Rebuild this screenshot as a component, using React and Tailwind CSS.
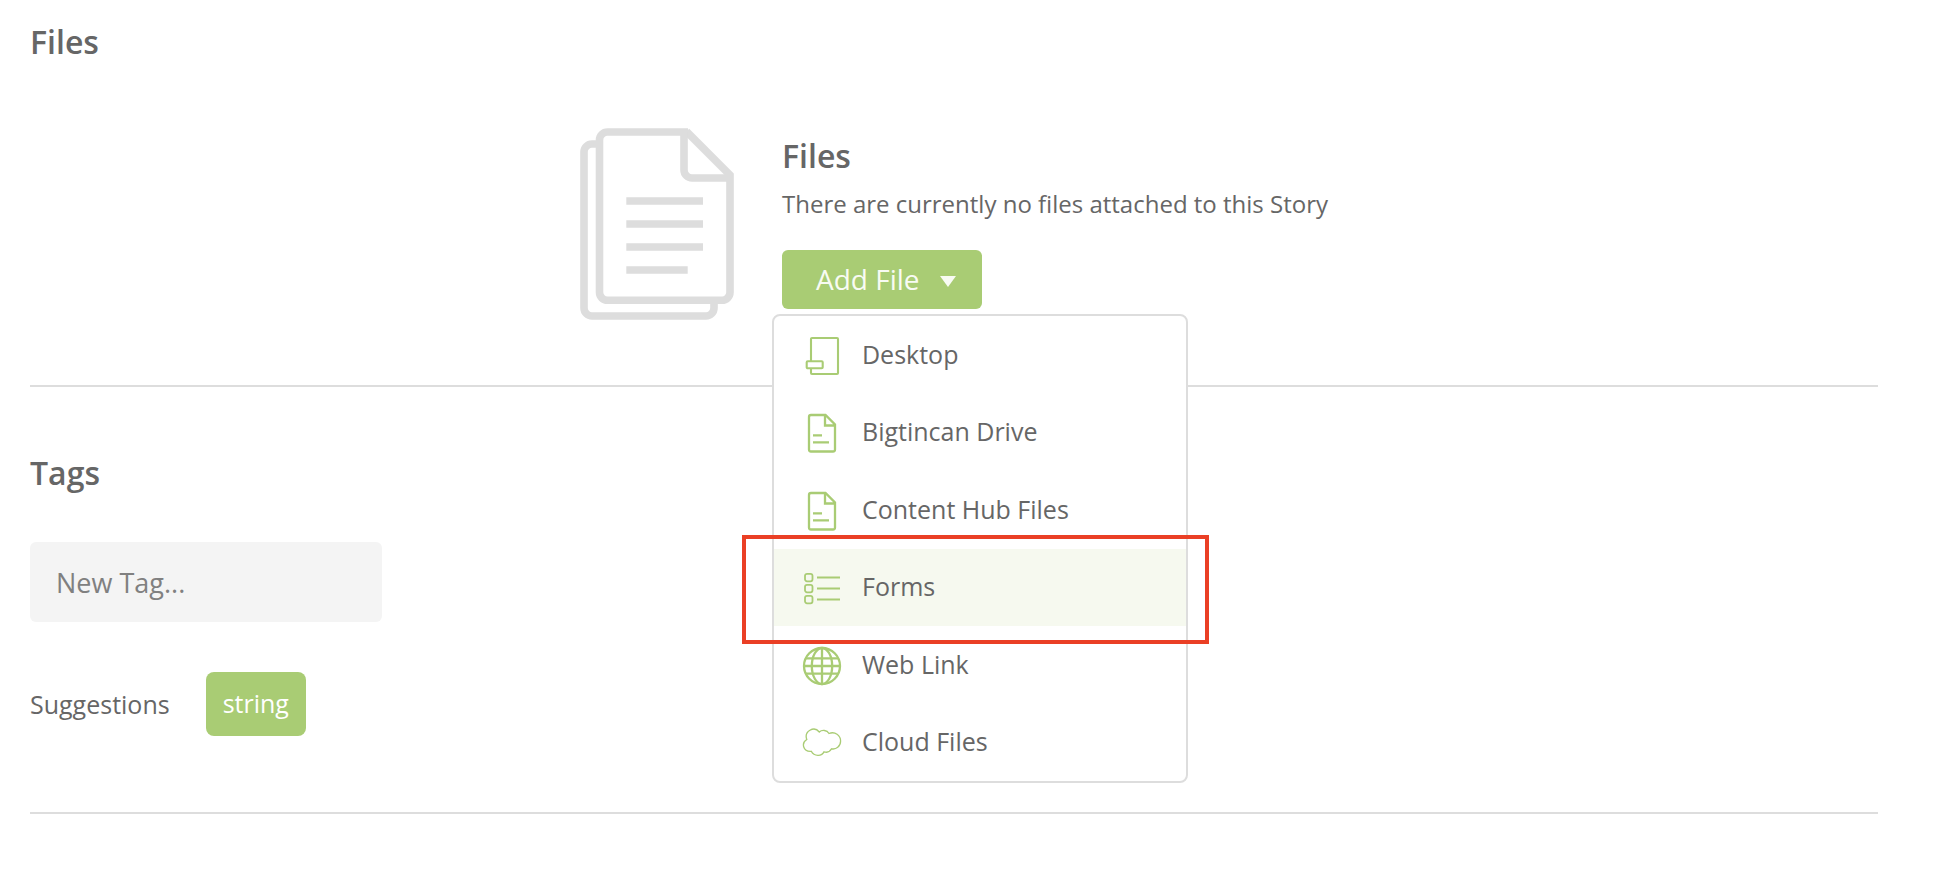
import { useState } from "react";

function FilesIcon() {
  return (
    <svg viewBox="0 0 154 192" className="h-48 w-[154px] shrink-0" fill="none" stroke="#dddddd" strokeWidth="7.6" aria-hidden="true">
      <path d="M17 16H12a8 8 0 0 0-8 8V180a8 8 0 0 0 8 8H126a8 8 0 0 0 8-8V174" />
      <path d="M108 4H27.500a8 8 0 0 0-8 8V164.300a8 8 0 0 0 8 8H142a8 8 0 0 0 8-8V47L106.500 3.500" />
      <path d="M104 4V42a8 8 0 0 0 8 8H150" />
      <path d="M46.300 73H123M46.300 96H123M46.300 119H123M46.300 142H107.700" />
    </svg>
  );
}

function MenuIcon({ children, strokeWidth = 2.3 }) {
  return (
    <svg viewBox="0 0 40 40" className="mt-1 size-10 shrink-0" fill="none" stroke="#a9cc74" strokeWidth={strokeWidth} aria-hidden="true">
      {children}
    </svg>
  );
}

const desktopIcon = (
  <MenuIcon strokeWidth={2.1}>
    <path d="M9 25V3a1 1 0 0 1 1-1H35a1 1 0 0 1 1 1V37a1 1 0 0 1-1 1H10a1 1 0 0 1-1-1V33" />
    <rect x="4.700" y="25.300" width="16" height="7" rx="1" />
  </MenuIcon>
);

const documentIcon = (
  <MenuIcon>
    <path d="M23.500 2H9a2 2 0 0 0-2 2V36.500a2 2 0 0 0 2 2H31a2 2 0 0 0 2-2V11.500ZM23 2V12.500H33" />
    <path d="M11 22.300H20M11 29.300H27" />
  </MenuIcon>
);

const formsIcon = (
  <MenuIcon strokeWidth={1.8}>
    <rect x="3" y="5.800" width="7.500" height="7.500" rx="2" />
    <rect x="3" y="16.800" width="7.500" height="7.500" rx="2" />
    <rect x="3" y="27.800" width="7.500" height="7.500" rx="2" />
    <path d="M15 9.500H38M15 20.500H38M15 31.500H38" />
  </MenuIcon>
);

const globeIcon = (
  <MenuIcon>
    <circle cx="20" cy="20" r="18" />
    <ellipse cx="20" cy="20" rx="10.200" ry="18" />
    <path d="M20 2V38M2 20H38M4 12.300H36M4 27.700H36" />
  </MenuIcon>
);

const cloudIcon = (
  <MenuIcon strokeWidth={1.3}>
    <path d="M4.800 16.500C1.800 8.500 12 2.500 17.300 9C20 6.500 25 7 27 10.500C33 8 38.600 12.500 38.600 18C38.600 23.500 34 26.800 29.500 25.800C28 28.600 25 29.800 22 28.800C20 33.600 12 33.600 9.300 28.300C1 29 -1 20 4.800 16.500Z" />
  </MenuIcon>
);

const options = [
  { label: "Desktop", icon: desktopIcon },
  { label: "Bigtincan Drive", icon: documentIcon },
  { label: "Content Hub Files", icon: documentIcon },
  { label: "Forms", icon: formsIcon, active: true },
  { label: "Web Link", icon: globeIcon },
  { label: "Cloud Files", icon: cloudIcon },
];

function AddFileMenu() {
  const [open, setOpen] = useState(true);
  return (
    <div className="relative mt-7 w-fit">
      <button
        type="button"
        aria-expanded={open}
        onClick={() => setOpen(!open)}
        className="flex h-[59px] items-center gap-5 rounded-md bg-[#a9cc74] pr-[26px] pb-0.5 pl-[34px] text-[28px] text-[#f8fbf3]"
      >
        Add File
        <svg viewBox="0 0 16 11" className="mt-1.5 h-[11px] w-4" fill="currentColor" aria-hidden="true">
          <path d="M0 0H16L8 11Z" />
        </svg>
      </button>
      {open && (
        <ul className="absolute top-full -left-2.5 z-10 mt-[5px] grid h-[469px] w-[416px] auto-rows-fr rounded-lg border-2 border-[#dddddd] bg-white">
          {options.map((option) => (
            <li key={option.label} className="relative grid">
              <button
                type="button"
                className={`flex items-center gap-5 pb-0.5 pl-7 text-left text-[25px] leading-9 ${option.active ? "bg-[#f6f9ef]" : ""}`}
              >
                {option.icon}
                {option.label}
              </button>
              {option.active && (
                <span className="pointer-events-none absolute -top-3.5 -right-[23px] -bottom-[18px] -left-8 z-20 border-4 border-[#ea3f25]" />
              )}
            </li>
          ))}
        </ul>
      )}
    </div>
  );
}

export default function App() {
  return (
    <main className="bg-white pr-[66px] pl-[30px] font-['Open_Sans',sans-serif] text-[#666666]">
      <section className="border-b-2 border-[#dddddd] pt-5 pb-[65px]">
        <h2 className="text-[32px] leading-11 font-semibold">Files</h2>
        <div className="mt-16 flex justify-center gap-12">
          <FilesIcon />
          <div className="pt-1.5">
            <h3 className="text-[32px] leading-11 font-semibold">Files</h3>
            <p className="mt-2 text-2xl leading-9">There are currently no files attached to this Story</p>
            <AddFileMenu />
          </div>
        </div>
      </section>
      <section className="border-b-2 border-[#dddddd] pt-16 pb-[76px]">
        <h2 className="text-[32px] leading-11 font-semibold">Tags</h2>
        <input
          type="text"
          aria-label="New Tag"
          placeholder="New Tag..."
          className="mt-[47px] block h-20 w-[352px] rounded-md bg-[#f4f4f4] px-[26px] text-[27px] placeholder:text-[#808080]"
        />
        <div className="mt-[50px] flex items-center gap-9">
          <span className="text-[25px] leading-9">Suggestions</span>
          <button type="button" className="h-16 rounded-lg bg-[#a9cc74] px-[17px] text-[25px] text-white">
            string
          </button>
        </div>
      </section>
    </main>
  );
}
